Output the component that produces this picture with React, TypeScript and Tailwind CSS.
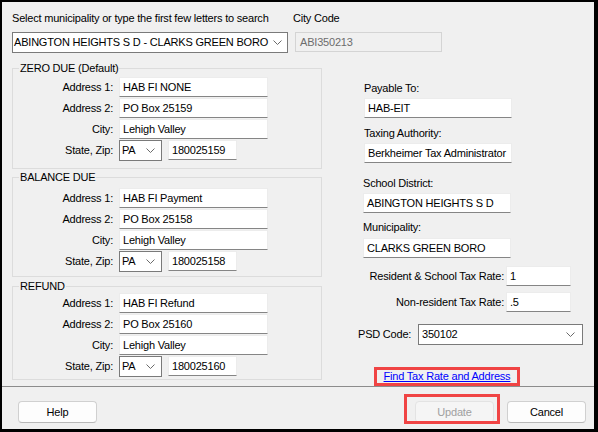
import type { ReactNode } from "react";
import { clsx, type ClassValue } from "clsx";
import { twMerge } from "tailwind-merge";

function cn(...inputs: ClassValue[]) {
  return twMerge(clsx(inputs));
}

function Chevron() {
  return (
    <svg width="9" height="5" viewBox="0 0 9 5" className="shrink-0">
      <path d="M0.5 0.5 L4.5 4.5 L8.5 0.5" fill="none" stroke="#6b6b6b" strokeWidth="1" />
    </svg>
  );
}

function TextBox({ value, className }: { value: string; className?: string }) {
  return (
    <div
      className={cn(
        "flex h-[20px] shrink-0 items-center border border-[#ececec] border-b-[#858585] bg-white pl-[3px] whitespace-nowrap",
        className,
      )}
    >
      {value}
    </div>
  );
}

function DropBox({ value, className }: { value: string; className?: string }) {
  return (
    <div
      className={cn(
        "flex h-[21px] shrink-0 items-center justify-between border border-[#7a7a7a] bg-white pl-[2px] pr-[6px] whitespace-nowrap",
        className,
      )}
    >
      <span>{value}</span>
      <Chevron />
    </div>
  );
}

function Row({ label, children }: { label: string; children: ReactNode }) {
  return (
    <div className="flex h-[21px] items-start gap-[6px]">
      <span className="w-[100px] text-right leading-[20px]">{label}</span>
      {children}
    </div>
  );
}

type Addr = {
  title: string;
  a1: string;
  a2: string;
  city: string;
  zip: string;
  className?: string;
};

function AddressGroup({ title, a1, a2, city, zip, className }: Addr) {
  return (
    <fieldset className={cn("w-[310px] border border-[#dcdcdc] px-0", className)}>
      <legend className="ml-[6px] px-[1px] leading-[14px]">{title}</legend>
      <Row label="Address 1:">
        <TextBox value={a1} className="w-[149px]" />
      </Row>
      <Row label="Address 2:">
        <TextBox value={a2} className="w-[149px]" />
      </Row>
      <Row label="City:">
        <TextBox value={city} className="w-[149px]" />
      </Row>
      <Row label="State, Zip:">
        <DropBox value="PA" className="w-[43px]" />
        <TextBox value={zip} className="w-[69px]" />
      </Row>
    </fieldset>
  );
}

function Button({ children, disabled }: { children: ReactNode; disabled?: boolean }) {
  return (
    <div
      className={cn(
        "flex h-[22px] w-[79px] items-center justify-center rounded-[4px] border border-[#d0d0d0] border-b-[#b8b8b8] bg-[#fdfdfd] text-black",
        disabled && "border-[#e3e3e3] border-b-[#e3e3e3] bg-[#f5f5f5] text-[#a0a0a0]",
      )}
    >
      {children}
    </div>
  );
}

export default function App() {
  return (
    <div className="flex h-[432px] w-[598px] flex-col border-t-2 border-r-4 border-b-3 border-l-2 border-black bg-[#f0f0f0] font-['Liberation_Sans',Arial,sans-serif] text-[11px] tracking-[-0.2px] text-black">
      {/* municipality picker */}
      <div className="flex shrink-0 pt-[9px] pl-[10px]">
        <div className="w-[276px]">
          <div className="leading-[14px] whitespace-nowrap">
            Select municipality or type the first few letters to search
          </div>
          <DropBox
            value="ABINGTON HEIGHTS S D - CLARKS GREEN BORO"
            className="mt-[7px] w-[276px] pl-[1px] pr-[5px]"
          />
        </div>
        <div className="ml-[5px]">
          <div className="leading-[14px]">City Code</div>
          <div className="mt-[7px] ml-[2px] flex h-[20px] w-[147px] items-center border border-[#d4d4d4] pl-[4px] text-[#6d6d6d]">
            ABI350213
          </div>
        </div>
      </div>

      <div className="mt-[8px] flex h-[325px] shrink-0 pl-[10px]">
        <div className="flex flex-col">
          <AddressGroup
            title="ZERO DUE (Default)"
            a1="HAB FI NONE"
            a2="PO Box 25159"
            city="Lehigh Valley"
            zip="180025159"
            className="pt-[2px] pb-[7px]"
          />
          <AddressGroup
            title="BALANCE DUE"
            a1="HAB FI Payment"
            a2="PO Box 25158"
            city="Lehigh Valley"
            zip="180025158"
            className="mt-[1px] pt-[4px] pb-[4px]"
          />
          <AddressGroup
            title="REFUND"
            a1="HAB FI Refund"
            a2="PO Box 25160"
            city="Lehigh Valley"
            zip="180025160"
            className="mt-[2px] pt-0 pb-[2px]"
          />
        </div>

        <div className="ml-[36px] flex flex-col pt-[20px]">
          <div className="ml-[6px] leading-[14px]">Payable To:</div>
          <TextBox value="HAB-EIT" className="mt-[3px] ml-[6px] w-[148px]" />
          <div className="mt-[8px] ml-[6px] leading-[14px]">Taxing Authority:</div>
          <TextBox value="Berkheimer Tax Administrator" className="mt-[3px] ml-[6px] w-[148px]" />
          <div className="mt-[13px] ml-[5px] leading-[14px]">School District:</div>
          <TextBox value="ABINGTON HEIGHTS S D" className="mt-[3px] ml-[5px] w-[148px]" />
          <div className="mt-[7px] ml-[5px] leading-[14px]">Municipality:</div>
          <TextBox value="CLARKS GREEN BORO" className="mt-[4px] ml-[5px] w-[148px]" />

          <div className="mt-[8px] flex items-center gap-[2px]">
            <span className="w-[146px] text-right whitespace-nowrap">Resident &amp; School Tax Rate:</span>
            <TextBox value="1" className="w-[65px]" />
          </div>
          <div className="mt-[6px] flex items-center gap-[2px]">
            <span className="w-[146px] text-right whitespace-nowrap">Non-resident Tax Rate:</span>
            <TextBox value=".5" className="w-[65px]" />
          </div>

          <div className="mt-[12px] flex items-center">
            <span className="w-[52px] shrink-0 whitespace-nowrap">PSD Code:</span>
            <DropBox value="350102" className="ml-[8px] w-[165px] pl-[3px] pr-[7px]" />
          </div>

          <div className="mt-[22px] ml-[16px] flex h-[19px] w-[146px] items-center justify-center border-[3px] border-[#f04444]">
            <a href="#" className="text-[#0000ff] underline whitespace-nowrap">
              Find Tax Rate and Address
            </a>
          </div>
        </div>
      </div>

      <div className="shrink-0 border-t border-[#8c8c8c]" />

      <div className="flex items-start pt-[14px] pr-[8px] pl-[16px]">
        <div className="w-[80px]">
          <Button>Help</Button>
        </div>
        <div className="relative ml-auto">
          <Button disabled>Update</Button>
          <span className="absolute -top-[7px] -right-[6px] -bottom-[1px] -left-[11px] border-[3px] border-[#f04444]" />
        </div>
        <div className="ml-[13px]">
          <Button>Cancel</Button>
        </div>
      </div>
    </div>
  );
}
